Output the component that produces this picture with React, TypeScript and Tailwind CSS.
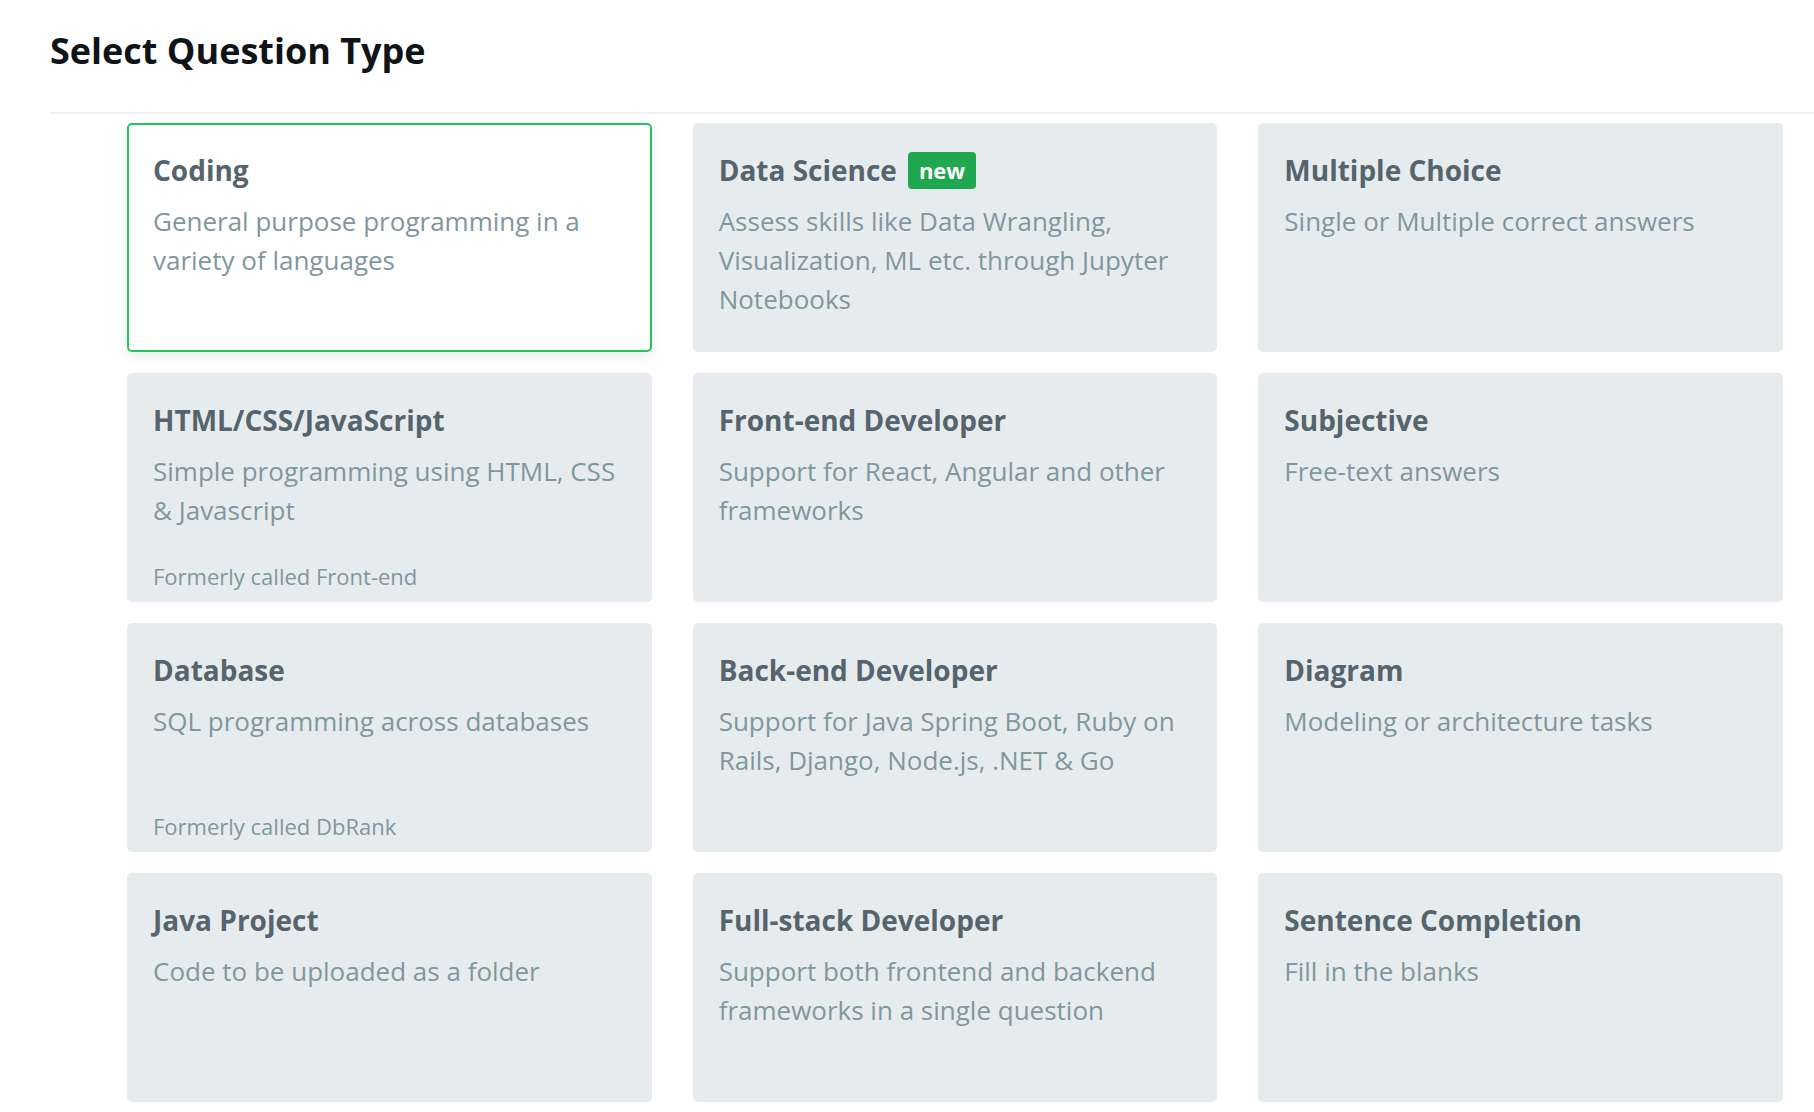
type QuestionType = {
  title: string;
  desc: string;
  note?: string;
  badge?: string;
  selected?: boolean;
};

const types: QuestionType[] = [
  { title: "Coding", desc: "General purpose programming in a variety of languages", selected: true },
  {
    title: "Data Science",
    desc: "Assess skills like Data Wrangling, Visualization, ML etc. through Jupyter Notebooks",
    badge: "new",
  },
  { title: "Multiple Choice", desc: "Single or Multiple correct answers" },
  {
    title: "HTML/CSS/JavaScript",
    desc: "Simple programming using HTML, CSS & Javascript",
    note: "Formerly called Front-end",
  },
  { title: "Front-end Developer", desc: "Support for React, Angular and other frameworks" },
  { title: "Subjective", desc: "Free-text answers" },
  { title: "Database", desc: "SQL programming across databases", note: "Formerly called DbRank" },
  {
    title: "Back-end Developer",
    desc: "Support for Java Spring Boot, Ruby on Rails, Django, Node.js, .NET & Go",
  },
  { title: "Diagram", desc: "Modeling or architecture tasks" },
  { title: "Java Project", desc: "Code to be uploaded as a folder" },
  { title: "Full-stack Developer", desc: "Support both frontend and backend frameworks in a single question" },
  { title: "Sentence Completion", desc: "Fill in the blanks" },
];

const TypeCard = ({ item }: { item: QuestionType }) => {
  return (
    <div
      className={`flex h-[229px] flex-col rounded-[5px] border-2 px-[24px] pt-[24px] pb-[9px] ${
        item.selected
          ? "border-[#22c55e] bg-white shadow-[0_4px_12px_rgba(0,0,0,0.08)]"
          : "border-transparent bg-[#e6ecee]"
      }`}
    >
      <div className="mb-[11px] flex items-center gap-[11px]">
        <span className="text-[28px] leading-[42px] font-bold text-[#55646d]">{item.title}</span>
        {item.badge && (
          <span className="rounded-[4px] bg-[#1fa84f] px-[11px] text-[22px] leading-[37px] font-bold text-white">
            {item.badge}
          </span>
        )}
      </div>
      <p className="text-[26px] leading-[39px] text-[#7f979d]">{item.desc}</p>
      {item.note && (
        <p className="mt-auto text-[22px] leading-[30px] text-[#7f979d]">{item.note}</p>
      )}
    </div>
  );
};

export default function App() {
  return (
    <div
      className="min-h-screen w-full bg-white"
      style={{ fontFamily: '"Open Sans", "Noto Sans", sans-serif' }}
    >
      <div className="pl-[50px]">
        <h1 className="pt-[26px] text-[36px] leading-[50px] font-bold text-[#0f1419]">
          Select Question Type
        </h1>
        <div className="mt-[36px] h-[2px] bg-[#f0f0f0]" />
      </div>

      {/* Question type grid */}
      <div className="grid w-[1656px] grid-cols-3 gap-x-[41px] gap-y-[21px] pt-[9px] pl-[127px] box-content">
        {types.map((t) => (
          <TypeCard key={t.title} item={t} />
        ))}
      </div>
    </div>
  );
}
